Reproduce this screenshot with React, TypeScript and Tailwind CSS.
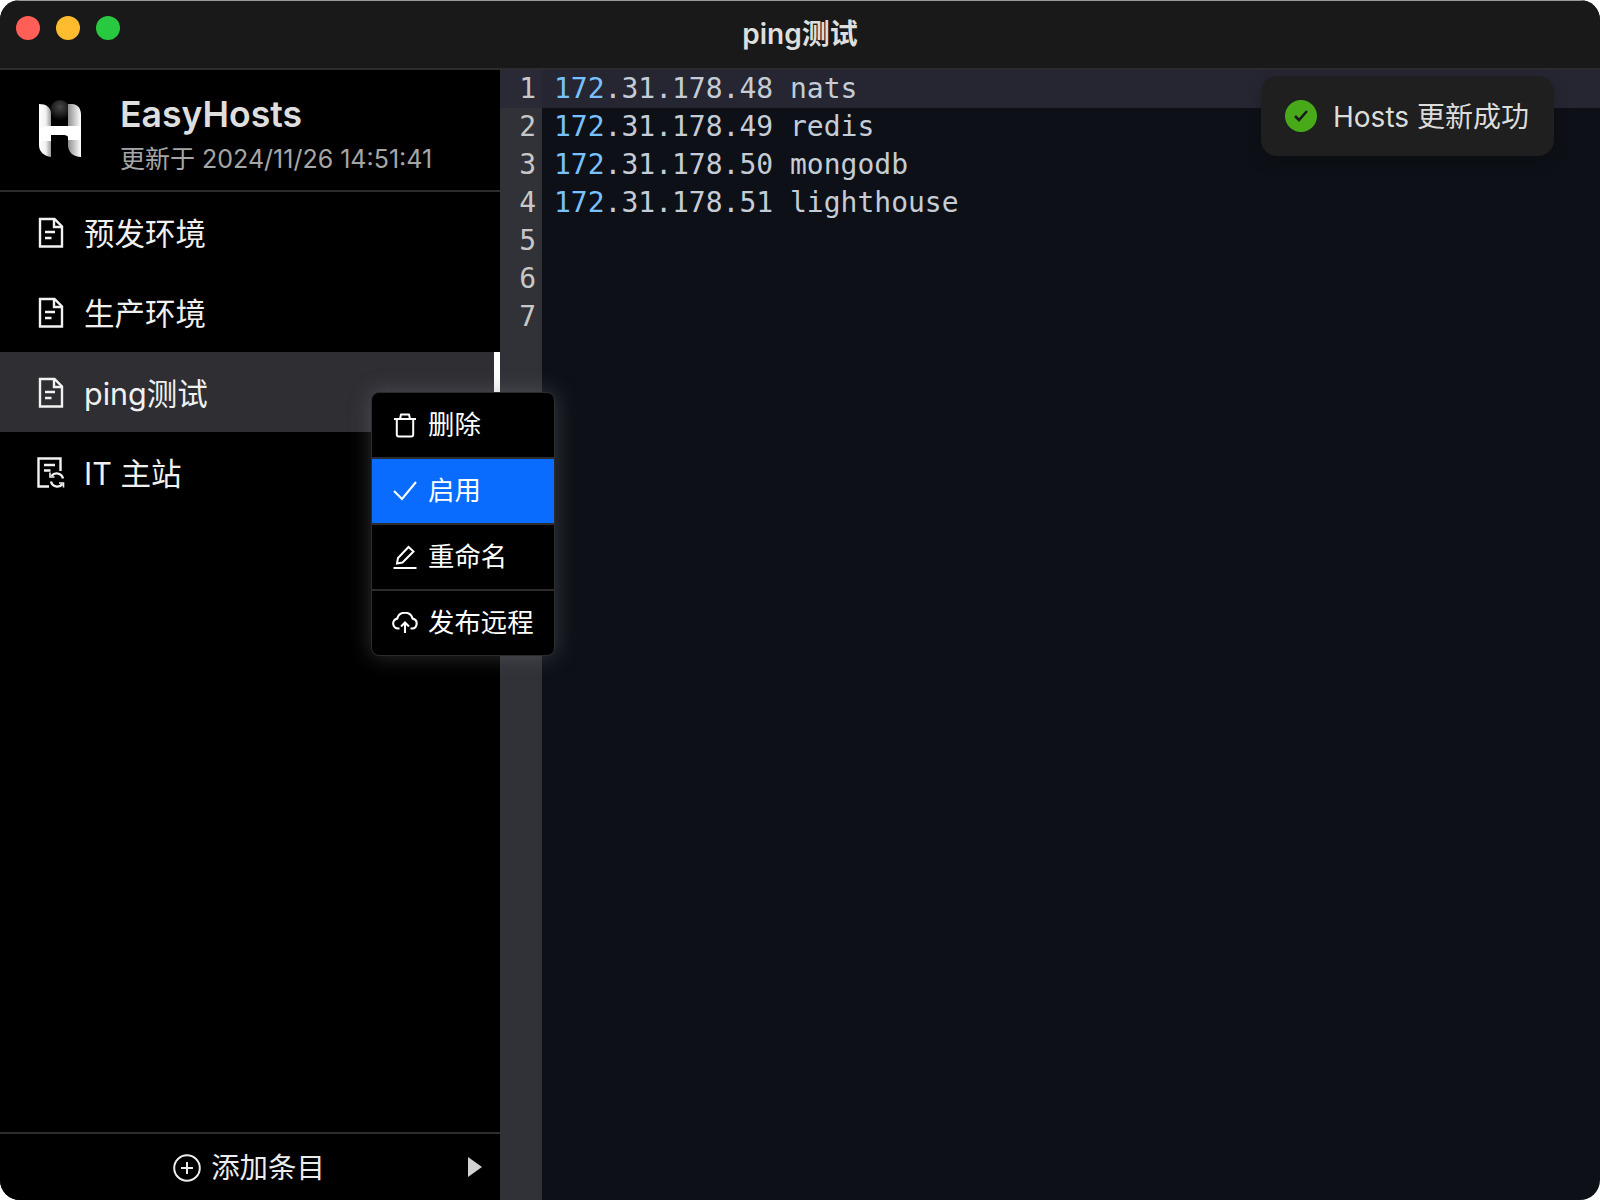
const sans = "font-['Inter','Noto_Sans_CJK_SC',sans-serif]"

function FileIcon() {
  return (
    <svg width="26" height="31" viewBox="0 0 26 31" fill="none" stroke="currentColor" strokeWidth="2.4" className="shrink-0">
      <path d="M2 2h14.5L24 9.5V29.5H2z" />
      <path d="M16 2v8h8" />
      <path d="M7 15h10M7 21h6.5" />
    </svg>
  )
}

function RemoteFileIcon() {
  return (
    <svg width="28" height="31" viewBox="0 0 28 31" fill="none" stroke="currentColor" strokeWidth="2.4" className="shrink-0">
      <path d="M12 29.5H1.5V1.5H23.5V14" />
      <path d="M7 8h11M7 13.5h6.5" />
      <path d="M26 21.5a6.5 6.5 0 0 0-11.5-2.5M14 24.5a6.5 6.5 0 0 0 11.5 2.5" />
      <path d="M13 15.5v4.5h4.5M26.5 30.5V26H22" strokeWidth="1.6" />
    </svg>
  )
}

function TrashIcon() {
  return (
    <svg width="24" height="25" viewBox="0 0 24 25" fill="none" stroke="currentColor" strokeWidth="2" strokeLinejoin="round" className="shrink-0">
      <path d="M1 6h22" />
      <path d="M7 6l1-4.5h8L17 6" />
      <path d="M3.8 6v15.5q0 2 2 2h12.4q2 0 2-2V6" />
    </svg>
  )
}

function CheckIcon() {
  return (
    <svg width="24" height="20" viewBox="0 0 24 20" fill="none" stroke="currentColor" strokeWidth="2.1" className="shrink-0">
      <path d="M1 10l8 8L23 1" />
    </svg>
  )
}

function PenIcon() {
  return (
    <svg width="24" height="24" viewBox="0 0 24 24" fill="none" stroke="currentColor" strokeWidth="2" className="shrink-0">
      <path d="M4 18.5l1-5.5L15.5 2l5 4.5L9.5 17.5z" />
      <path d="M0.5 23h23" />
    </svg>
  )
}

function CloudIcon() {
  return (
    <svg width="26" height="22" viewBox="0 0 26 22" fill="none" stroke="currentColor" strokeWidth="2.1" className="shrink-0">
      <path d="M7.5 16.5H6a5 5 0 0 1-.8-9.9 8 8 0 0 1 15.4 0A5 5 0 0 1 20 16.5h-1.5" />
      <path d="M13 21V11M9 14.5l4-4 4 4" />
    </svg>
  )
}

function PlusCircleIcon() {
  return (
    <svg width="28" height="28" viewBox="0 0 28 28" fill="none" stroke="currentColor" strokeWidth="2" className="shrink-0">
      <circle cx="14" cy="14" r="12.8" />
      <path d="M14 8v12M8 14h12" />
    </svg>
  )
}

function Logo() {
  return (
    <svg width="44" height="60" viewBox="0 0 44 60" className="shrink-0">
      <defs>
        <linearGradient id="logoLeft" x1="0" y1="0" x2="1" y2="0">
          <stop offset="0" stopColor="#ffffff" />
          <stop offset="0.55" stopColor="#f2f2f2" />
          <stop offset="1" stopColor="#9a9a9a" />
        </linearGradient>
        <linearGradient id="logoLower" x1="0" y1="0" x2="1" y2="0">
          <stop offset="0" stopColor="#8f8f8f" />
          <stop offset="1" stopColor="#ffffff" />
        </linearGradient>
        <radialGradient id="logoDot" cx="0.5" cy="0.35" r="0.6">
          <stop offset="0" stopColor="#484848" />
          <stop offset="1" stopColor="#080808" />
        </radialGradient>
      </defs>
      <circle cx="22" cy="11" r="10" fill="url(#logoDot)" />
      <path d="M1 5c7 0 12 3 12 10v43C6 57 1 53 1 46z" fill="url(#logoLeft)" />
      <path d="M30 5h4c6 0 9 5 9 11v42c-8 0-13-5-13-12z" fill="url(#logoLower)" />
      <path d="M9 27h34v14H30V38c0-1-2-2-4-2H13v6H1v-3c0-7 3-12 8-12z" fill="#ffffff" />
    </svg>
  )
}

const items = [
  { label: '预发环境', icon: <FileIcon /> },
  { label: '生产环境', icon: <FileIcon /> },
  { label: 'ping测试', icon: <FileIcon />, active: true },
  { label: 'IT 主站', icon: <RemoteFileIcon /> },
]

const lines = [
  ['172', '.31.178.48 nats'],
  ['172', '.31.178.49 redis'],
  ['172', '.31.178.50 mongodb'],
  ['172', '.31.178.51 lighthouse'],
]

const menu = [
  { label: '删除', icon: <TrashIcon /> },
  { label: '启用', icon: <CheckIcon />, active: true },
  { label: '重命名', icon: <PenIcon /> },
  { label: '发布远程', icon: <CloudIcon /> },
]

export default function App() {
  return (
    <div className={`relative flex h-[1200px] w-[1600px] flex-col overflow-hidden rounded-[20px] bg-[#0d1117] ${sans}`}>
      {/* title bar */}
      <div className="relative flex h-[70px] shrink-0 items-start justify-center border-t border-b-2 border-t-[#9a9a9a] border-b-[#2c2c2e] bg-[#191919] pt-[15px]">
        <div className="absolute top-[15px] left-4 flex gap-4">
          <div className="h-6 w-6 rounded-full bg-[#ff5f57]" />
          <div className="h-6 w-6 rounded-full bg-[#febc2e]" />
          <div className="h-6 w-6 rounded-full bg-[#28c840]" />
        </div>
        <span className="text-[28px] leading-[36px] font-semibold text-[#dedede]">ping测试</span>
      </div>

      <div className="flex min-h-0 flex-1">
        {/* sidebar */}
        <div className="relative flex w-[500px] shrink-0 flex-col bg-black">
          <div className="flex h-[122px] shrink-0 items-center gap-[38px] border-b-2 border-[#2c2c2e] pb-[2px] pl-[38px]">
            <Logo />
            <div className="flex flex-col pt-[10px]">
              <span className="text-[35.6px] leading-[46px] font-semibold text-[#dedede]">EasyHosts</span>
              <span className="mt-1 text-[25px] leading-[34px] text-[#a6a6a6]">更新于 2024/11/26 14:51:41</span>
            </div>
          </div>
          <div className="flex flex-1 flex-col">
            {items.map((item) => (
              <div
                key={item.label}
                className={`relative flex h-20 items-center gap-5 pl-[38px] ${item.active ? 'bg-[#2e2e33]' : ''}`}
              >
                <span className="flex w-[26px] justify-center pt-[1px] text-[#f2f2f2]">{item.icon}</span>
                <span className="pt-1 text-[30.5px] text-[#f0f0f0]">{item.label}</span>
                {item.active && <div className="absolute top-0 right-0 h-full w-[6px] bg-white" />}
              </div>
            ))}
          </div>
          <div className="relative flex h-[68px] shrink-0 items-center justify-center gap-[10px] border-t-2 border-[#2c2c2e] pt-[2px] pr-[2px] text-[#ececec]">
            <PlusCircleIcon />
            <span className="text-[28.4px]">添加条目</span>
            <div className="absolute top-[23px] left-[468px] h-0 w-0 border-y-[10px] border-l-[14px] border-y-transparent border-l-[#d2d2d2]" />
          </div>
        </div>

        {/* editor */}
        <div className="relative flex min-w-0 flex-1 font-['DejaVu_Sans_Mono',monospace] text-[28px] leading-[38px]">
          <div className="flex w-[42px] shrink-0 flex-col bg-[#313238] pr-[6px] text-right text-[#c8c8c8]">
            {[1, 2, 3, 4, 5, 6, 7].map((n, i) => (
              <div key={n} className={`h-[38px] ${i === 0 ? '-mr-[6px] bg-[#2a2a36] pr-[6px]' : ''}`}>
                {n}
              </div>
            ))}
          </div>
          <div className="flex min-w-0 flex-1 flex-col">
            {lines.map(([head, rest], i) => (
              <div key={i} className={`h-[38px] pl-3 ${i === 0 ? 'bg-[#262632]' : ''} text-[#c5ccd6]`}>
                <span className="text-[#79c0ff]">{head}</span>
                {rest}
              </div>
            ))}
          </div>
        </div>
      </div>

      {/* context menu */}
      <div className="absolute top-[392px] left-[371px] flex w-[184px] flex-col gap-[2px] overflow-hidden rounded-lg border border-[#2c2c2e] bg-[#2c2c2e] shadow-[0_0_22px_rgba(130,130,140,0.38)]">
        {menu.map((row) => (
          <div
            key={row.label}
            className={`flex h-[64px] items-center gap-[9px] pl-[19px] text-white ${row.active ? 'bg-[#0a6cff]' : 'bg-black'}`}
          >
            <span className="flex w-[28px] justify-center">{row.icon}</span>
            <span className="text-[26.4px]">{row.label}</span>
          </div>
        ))}
      </div>

      {/* toast */}
      <div className="absolute top-[76px] right-[46px] flex h-20 w-[293px] items-center gap-4 rounded-2xl bg-[#1f1f1f] pl-6 shadow-[0_6px_16px_rgba(0,0,0,0.2)]">
        <div className="flex h-8 w-8 items-center justify-center rounded-full bg-[#49aa19]">
          <svg width="16" height="14" viewBox="0 0 16 14" fill="none" stroke="#1b1b1b" strokeWidth="2.6">
            <path d="M2 7l4 4 8-9" />
          </svg>
        </div>
        <span className="pt-[2px] text-[28px] text-[#dcdcdc]">Hosts 更新成功</span>
      </div>
    </div>
  )
}
